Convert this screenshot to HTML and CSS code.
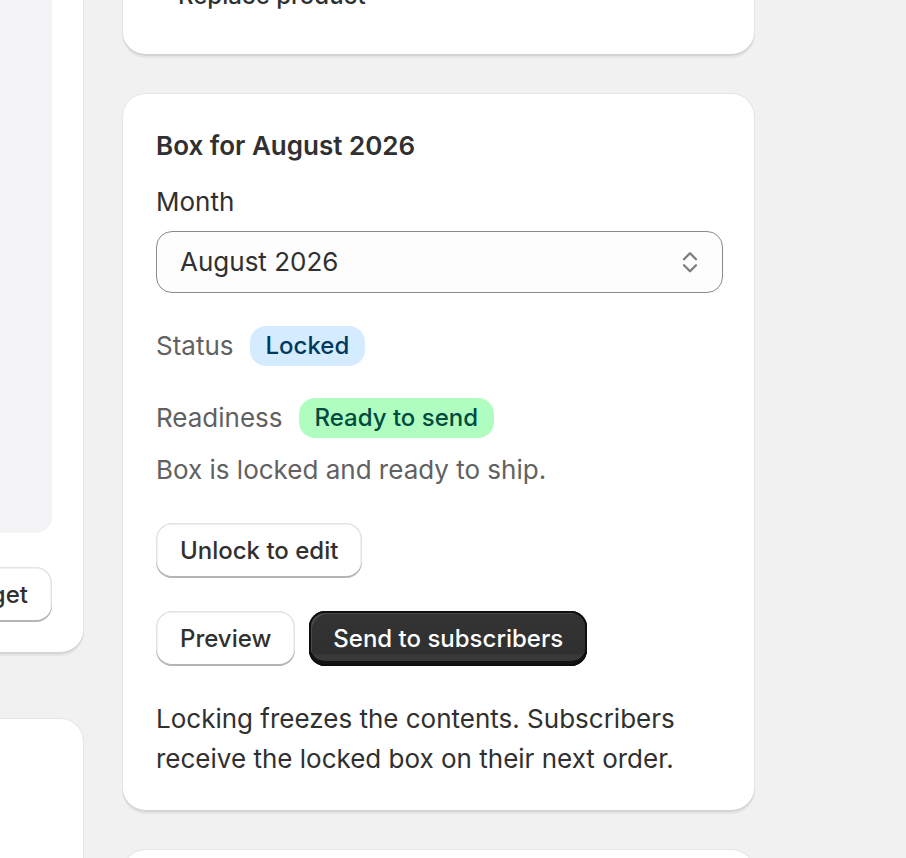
FILE: index.html
```html
<!DOCTYPE html>
<html lang="en">
<head>
<meta charset="utf-8">
<title>Box for August 2026</title>
<link rel="stylesheet" href="styles.css">
</head>
<body>
<div class="page">
  <div class="col col-left">
    <section class="card card-left">
      <div class="well"></div>
      <div class="row-end">
        <button class="btn btn-secondary">Set budget</button>
      </div>
    </section>
    <section class="card card-left card-left-2"></section>
  </div>
  <div class="col col-main">
    <section class="card card-top">
      <button class="btn btn-plain">Replace product</button>
    </section>
    <section class="card card-box">
      <h2 class="heading">Box for August 2026</h2>
      <div class="field">
        <label class="label" for="month">Month</label>
        <div class="select">
          <span class="select-value">August 2026</span>
          <svg class="select-icon" viewBox="0 0 20 20" width="40" height="40" aria-hidden="true">
            <polyline points="7,8.6 10,5.6 13,8.6" fill="none" stroke="#7d7d7d" stroke-width="1.15" stroke-linecap="round" stroke-linejoin="round"/>
            <polyline points="7,11.6 10,14.6 13,11.6" fill="none" stroke="#7d7d7d" stroke-width="1.15" stroke-linecap="round" stroke-linejoin="round"/>
          </svg>
        </div>
      </div>
      <div class="meta">
        <span class="meta-label">Status</span>
        <span class="badge badge-info">Locked</span>
      </div>
      <div class="readiness">
        <div class="meta">
          <span class="meta-label">Readiness</span>
          <span class="badge badge-success">Ready to send</span>
        </div>
        <p class="subdued">Box is locked and ready to ship.</p>
      </div>
      <div class="row">
        <button class="btn btn-secondary">Unlock to edit</button>
      </div>
      <div class="row">
        <button class="btn btn-secondary">Preview</button>
        <button class="btn btn-primary">Send to subscribers</button>
      </div>
      <p class="body">Locking freezes the contents. Subscribers receive the locked box on their next order.</p>
    </section>
    <section class="card card-next"></section>
  </div>
</div>
</body>
</html>
```
FILE: styles.css
```css
* { box-sizing: border-box; }

html, body {
  margin: 0;
  padding: 0;
  background: #f1f1f1;
  overflow: hidden;
  height: 858px;
}

body {
  font-family: Inter, "Noto Sans", "Liberation Sans", sans-serif;
  font-size: 26px;
  line-height: 40px;
  color: #303030;
  -webkit-font-smoothing: antialiased;
}

.page {
  display: flex;
  align-items: flex-start;
  gap: 38px;
  margin-left: -300px;
  margin-top: -64px;
}

.col {
  display: flex;
  flex-direction: column;
}

.col-left {
  width: 384px;
  flex: none;
}

.col-main {
  width: 633px;
  flex: none;
  gap: 37px;
}

.card {
  background: #ffffff;
  border-radius: 24px;
  box-shadow:
    0 2px 1px 0 rgba(26, 26, 26, 0.06),
    inset 0 -2px 0 0 #d4d4d4,
    inset 1px 0 0 0 #e6e6e6,
    inset -1px 0 0 0 #e6e6e6,
    inset 0 1px 0 0 #e6e6e6;
}

.card-left {
  padding: 32px;
  display: flex;
  flex-direction: column;
  gap: 34px;
}

.well {
  height: 565px;
  background: #f4f4f6;
  border-radius: 16px;
}

.row-end {
  display: flex;
  justify-content: flex-end;
}

.card-left-2 {
  margin-top: 64px;
  height: 300px;
  padding: 0;
}

.card-top {
  padding: 32px;
}

.card-box {
  padding: 33px 32px 33px 34px;
  display: flex;
  flex-direction: column;
}

.card-next {
  height: 200px;
}

.heading {
  margin: 0;
  font-size: 26px;
  line-height: 40px;
  font-weight: 600;
  color: #303030;
}

.field {
  margin-top: 16px;
  display: flex;
  flex-direction: column;
  gap: 9px;
}

.label {
  display: block;
  color: #303030;
}

.select {
  height: 62px;
  display: flex;
  align-items: center;
  justify-content: space-between;
  padding: 0 12px 0 23px;
  background: #fdfdfd;
  border: 1.5px solid #8a8a8a;
  border-radius: 16px;
}

.select-value {
  color: #303030;
}

.select-icon {
  display: block;
}

.meta {
  display: flex;
  align-items: center;
  gap: 16px;
  height: 40px;
}

.card-box > .meta {
  margin-top: 33px;
}

.meta-label {
  color: #616161;
}

.badge {
  display: inline-flex;
  align-items: center;
  height: 40px;
  padding: 0 16px;
  border-radius: 16px;
  font-size: 24px;
  font-weight: 550;
}

.badge-info {
  background: #d5ebff;
  color: #003a5a;
}

.badge-success {
  background: #affebf;
  color: #014b40;
}

.readiness {
  margin-top: 32px;
  display: flex;
  flex-direction: column;
  gap: 12px;
}

.subdued {
  margin: 0;
  color: #616161;
}

.row {
  display: flex;
  gap: 14px;
  margin-top: 33px;
}

.btn {
  font-family: inherit;
  font-size: 24px;
  font-weight: 550;
  line-height: 32px;
  height: 55px;
  padding: 0 24px;
  border: 0;
  border-radius: 16px;
  cursor: pointer;
}

.btn-secondary {
  background: #ffffff;
  color: #303030;
  box-shadow:
    inset 0 -2px 0 0 #b5b5b5,
    inset 0 0 0 1.5px #e3e3e3;
}

.btn-primary {
  color: #ffffff;
  background: linear-gradient(#333333 0, #303030 78%, #3a3a3a 80%, #383838 100%);
  box-shadow:
    inset 0 0 0 2px #0f0f0f,
    inset 0 -4px 0 1px #141414,
    inset 3px 3px 0 0 #4a4a4a;
  padding: 0 24px;
}

.btn-plain {
  background: transparent;
  height: 56px;
  padding: 0 24px;
  color: #303030;
}

.body {
  margin: 33px 0 0;
  color: #303030;
}
```
